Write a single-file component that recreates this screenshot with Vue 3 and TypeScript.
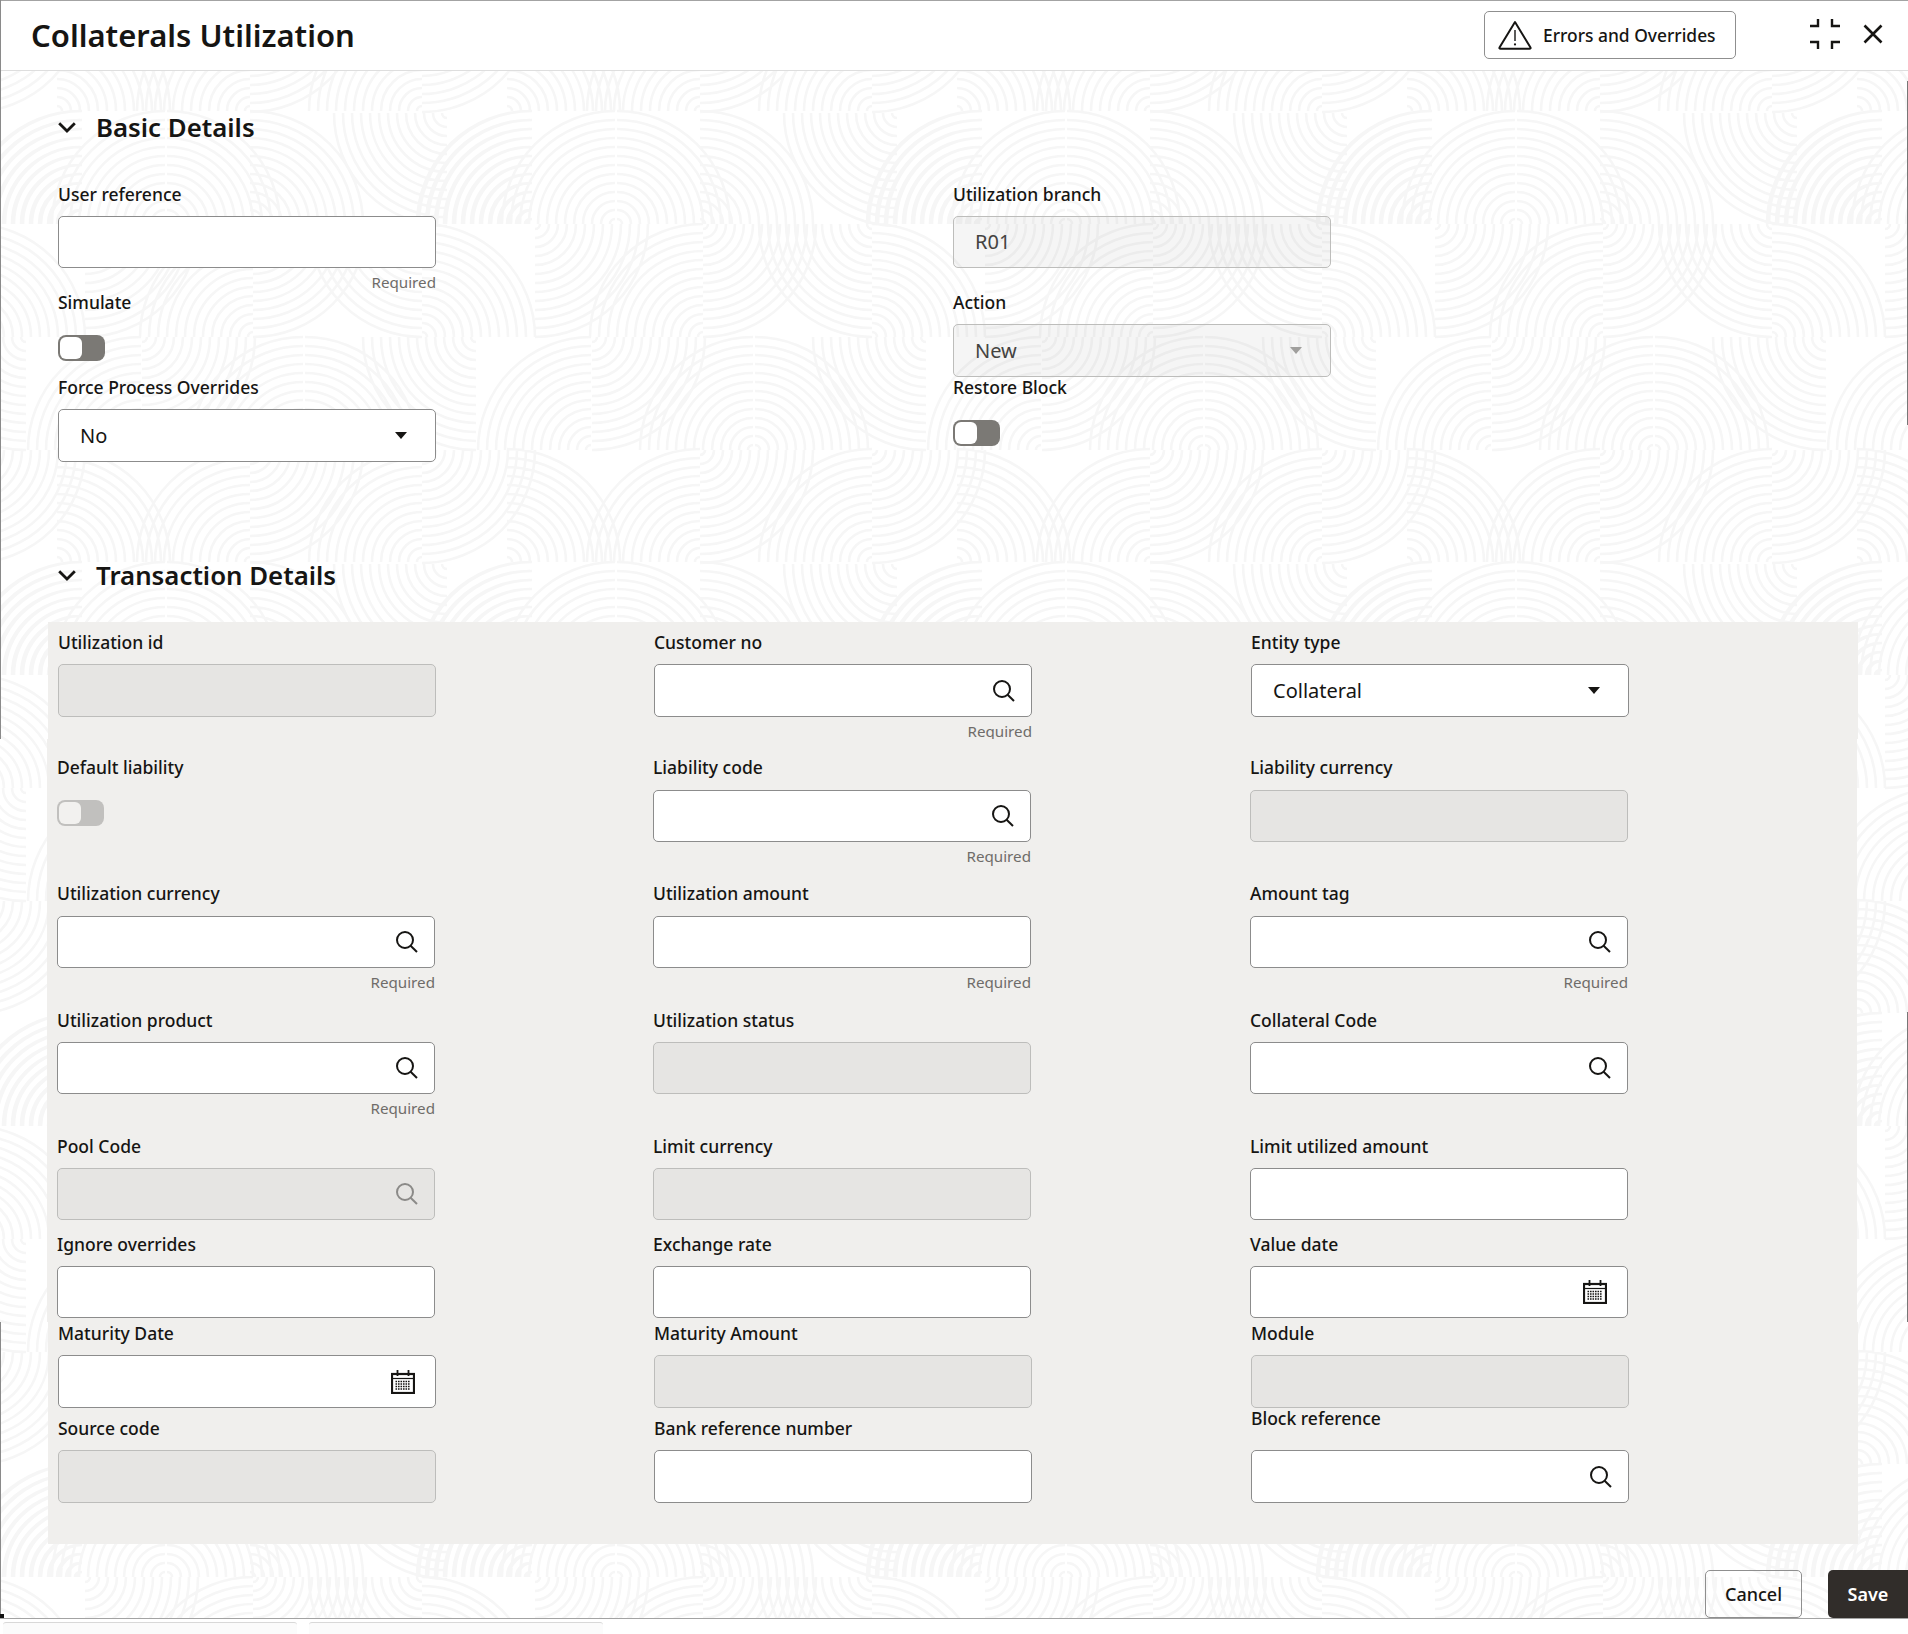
<script setup lang="ts">
type Kind = 'text' | 'disabled' | 'select' | 'search' | 'search-off' | 'date' | 'toggle' | 'toggle-off' | 'lookup-ro'
interface Field {
  label: string
  kind: Kind
  value?: string
  required?: boolean
  raised?: boolean
}
interface Row {
  cls: string
  fields: Field[]
}

type Quad = 'TL' | 'TR' | 'BR' | 'BL'
const quads: [number, number, Quad][] = [
  [532, 224, 'TL'], [615, 224, 'TL'], [617, 224, 'TR'], [700, 224, 'TR'], [897, 113, 'BL'], [530, 224, 'TL'],
  [535, 224, 'BR'], [703, 337, 'TL'], [703, 224, 'BR'], [872, 224, 'BL'], [872, 337, 'TR'],
  [476, 337, 'BL'], [591, 450, 'TL'], [592, 337, 'BR'], [753, 450, 'TL'], [755, 450, 'TR'],
  [507, 562, 'TR'], [700, 562, 'TL'], [700, 450, 'BR'], [872, 562, 'TL'], [872, 450, 'BR'],
]

function arc(cx: number, cy: number, q: Quad, r: number): string {
  const pts: Record<Quad, [number, number, number, number]> = {
    TL: [cx - r, cy, cx, cy - r],
    TR: [cx, cy - r, cx + r, cy],
    BR: [cx + r, cy, cx, cy + r],
    BL: [cx, cy + r, cx - r, cy],
  }
  const [a, b, c, d] = pts[q]
  return `M${a} ${b}A${r} ${r} 0 0 1 ${c} ${d}`
}

const arcPath: string = (() => {
  const parts: string[] = []
  for (const [x, y, q] of quads) {
    const cx0 = x % 450
    const cy0 = y % 451
    for (const dx of [-450, 0, 450]) {
      for (const dy of [-451, 0, 451]) {
        const cx = cx0 + dx
        const cy = cy0 + dy
        if (cx < -120 || cx > 570 || cy < -120 || cy > 571) continue
        for (let r = 5; r <= 113; r += 9) parts.push(arc(cx, cy, q, r))
      }
    }
  }
  return parts.join('')
})()

const basicLeft: { cls: string; field: Field }[] = [
  { cls: 'b1', field: { label: 'User reference', kind: 'text', required: true } },
  { cls: 'b2', field: { label: 'Simulate', kind: 'toggle' } },
  { cls: 'b3', field: { label: 'Force Process Overrides', kind: 'select', value: 'No' } },
]
const basicRight: { cls: string; field: Field }[] = [
  { cls: 'b1', field: { label: 'Utilization branch', kind: 'disabled', value: 'R01' } },
  { cls: 'b2', field: { label: 'Action', kind: 'lookup-ro', value: 'New' } },
  { cls: 'b3', field: { label: 'Restore Block', kind: 'toggle' } },
]

const segA: Row[] = [
  {
    cls: 'r1 tall53',
    fields: [
      { label: 'Utilization id', kind: 'disabled' },
      { label: 'Customer no', kind: 'search', required: true },
      { label: 'Entity type', kind: 'select', value: 'Collateral' },
    ],
  },
]
const segB: Row[] = [
  {
    cls: 'r2 gap10',
    fields: [
      { label: 'Default liability', kind: 'toggle-off' },
      { label: 'Liability code', kind: 'search', required: true },
      { label: 'Liability currency', kind: 'disabled' },
    ],
  },
  {
    cls: 'r3 gap10',
    fields: [
      { label: 'Utilization currency', kind: 'search', required: true },
      { label: 'Utilization amount', kind: 'text', required: true },
      { label: 'Amount tag', kind: 'search', required: true },
    ],
  },
  {
    cls: 'r4',
    fields: [
      { label: 'Utilization product', kind: 'search', required: true },
      { label: 'Utilization status', kind: 'disabled' },
      { label: 'Collateral Code', kind: 'search' },
    ],
  },
  {
    cls: 'r5',
    fields: [
      { label: 'Pool Code', kind: 'search-off' },
      { label: 'Limit currency', kind: 'disabled' },
      { label: 'Limit utilized amount', kind: 'text' },
    ],
  },
  {
    cls: 'r6',
    fields: [
      { label: 'Ignore overrides', kind: 'text' },
      { label: 'Exchange rate', kind: 'text' },
      { label: 'Value date', kind: 'date' },
    ],
  },
]
const segC: Row[] = [
  {
    cls: 'r7 tall53',
    fields: [
      { label: 'Maturity Date', kind: 'date' },
      { label: 'Maturity Amount', kind: 'disabled' },
      { label: 'Module', kind: 'disabled' },
    ],
  },
  {
    cls: 'r8 tall53',
    fields: [
      { label: 'Source code', kind: 'disabled' },
      { label: 'Bank reference number', kind: 'text' },
      { label: 'Block reference', kind: 'search', raised: true },
    ],
  },
]
const segments: { cls: string; rows: Row[] }[] = [
  { cls: 'seg-a', rows: segA },
  { cls: 'seg-b', rows: segB },
  { cls: 'seg-c', rows: segC },
]

const calendarRows: number[] = [11.5, 14, 16.5, 19]

function isToggle(k: Kind): boolean {
  return k === 'toggle' || k === 'toggle-off'
}
function isOff(k: Kind): boolean {
  return k === 'disabled' || k === 'search-off' || k === 'lookup-ro'
}
</script>

<template>
  <div class="app">
    <svg class="texture" width="1908" height="1618" aria-hidden="true">
      <defs>
        <pattern id="arcs" patternUnits="userSpaceOnUse" width="450" height="451">
          <path :d="arcPath" fill="none" stroke="#f6f6f6" stroke-width="2.6" />
        </pattern>
      </defs>
      <rect width="1908" height="1618" fill="url(#arcs)" />
    </svg>

    <span class="edge edge-l1"></span>
    <span class="edge edge-l2"></span>
    <span class="edge edge-r1"></span>
    <span class="edge edge-r2"></span>
    <span class="corner"></span>

    <div class="window">
      <header class="top">
        <h1 class="title">Collaterals Utilization</h1>
        <div class="top-actions">
          <button class="errors" type="button">
            <svg class="warn" width="34" height="30" viewBox="0 0 34 30" fill="none">
              <path d="M17 2 L32.5 27.5 Q33 28.8 31.5 28.8 H2.5 Q1 28.8 1.5 27.5 Z" stroke="#161513" stroke-width="2" stroke-linejoin="round" />
              <path d="M17 10 V21" stroke="#161513" stroke-width="1.4" />
              <circle cx="17" cy="24.4" r="1.1" fill="#161513" />
            </svg>
            <span>Errors and Overrides</span>
          </button>
          <svg class="compress" width="30" height="30" viewBox="0 0 30 30" fill="none" stroke="#161513" stroke-width="2.4">
            <path d="M0 7 H8 V0" />
            <path d="M22 0 V7 H30" />
            <path d="M0 23 H8 V30" />
            <path d="M22 30 V23 H30" />
          </svg>
          <svg class="close" width="20" height="20" viewBox="0 0 20 20" fill="none" stroke="#161513" stroke-width="2.6">
            <path d="M1.5 1.5 L18.5 18.5 M18.5 1.5 L1.5 18.5" />
          </svg>
        </div>
      </header>

      <main class="main">
        <div class="sec-head">
          <svg width="18" height="11" viewBox="0 0 18 11" fill="none" stroke="#161513" stroke-width="2.8">
            <path d="M1.2 1.2 L9 9 L16.8 1.2" />
          </svg>
          <h2>Basic Details</h2>
        </div>

        <div class="basic">
          <div v-for="(col, ci) in [basicLeft, basicRight]" :key="ci" class="basic-col">
            <div v-for="item in col" :key="item.field.label" class="field" :class="item.cls">
              <label class="lbl">{{ item.field.label }}</label>
              <div v-if="isToggle(item.field.kind)" class="toggle" :class="{ off: item.field.kind === 'toggle-off' }">
                <span class="knob"></span>
              </div>
              <div v-else class="box" :class="{ ro: isOff(item.field.kind) }">
                <span v-if="item.field.value" class="val">{{ item.field.value }}</span>
                <span v-if="item.field.kind === 'select' || item.field.kind === 'lookup-ro'" class="caret"></span>
              </div>
              <div v-if="item.field.required" class="req">Required</div>
            </div>
          </div>
        </div>

        <div class="sec-head">
          <svg width="18" height="11" viewBox="0 0 18 11" fill="none" stroke="#161513" stroke-width="2.8">
            <path d="M1.2 1.2 L9 9 L16.8 1.2" />
          </svg>
          <h2>Transaction Details</h2>
        </div>

        <section class="panel">
          <div v-for="seg in segments" :key="seg.cls" class="seg" :class="seg.cls">
            <div v-for="row in seg.rows" :key="row.cls" class="row" :class="row.cls">
              <div v-for="f in row.fields" :key="f.label" class="field" :class="{ raised: f.raised }">
                <label class="lbl">{{ f.label }}</label>
                <div v-if="isToggle(f.kind)" class="toggle" :class="{ off: f.kind === 'toggle-off' }">
                  <span class="knob"></span>
                </div>
                <div v-else class="box" :class="{ ro: isOff(f.kind) }">
                  <span v-if="f.value" class="val">{{ f.value }}</span>
                  <span v-if="f.kind === 'select'" class="caret"></span>
                  <svg v-if="f.kind === 'search' || f.kind === 'search-off'" class="search" width="23" height="23" viewBox="0 0 23 23" fill="none" :stroke="f.kind === 'search' ? '#161513' : '#8b8a88'" stroke-width="2">
                    <circle cx="10" cy="10" r="8" />
                    <path d="M15.6 15.8 L22 22" />
                  </svg>
                  <svg v-if="f.kind === 'date'" class="cal" width="24" height="24" viewBox="0 0 24 24" fill="none" stroke="#161513">
                    <rect x="1" y="4" width="22" height="19" stroke-width="2.2" />
                    <path d="M6.5 0 V6 M17.5 0 V6" stroke-width="1.8" />
                    <path d="M1 8.5 H23" stroke-width="1.2" />
                    <path v-for="y in calendarRows" :key="y" :d="`M4.5 ${y} H19.5`" stroke-width="1.7" stroke-dasharray="1.6 0.9" />
                  </svg>
                </div>
                <div v-if="f.required" class="req">Required</div>
              </div>
            </div>
          </div>
        </section>

        <footer class="foot">
          <button class="btn cancel" type="button">Cancel</button>
          <button class="btn save" type="button">Save</button>
        </footer>
      </main>
    </div>

    <div class="tabs">
      <span class="tab"></span>
      <span class="tab"></span>
    </div>
  </div>
</template>

<style>
html, body { margin: 0; background: #fff; }
</style>

<style scoped>
.app {
  position: relative;
  width: 1908px;
  height: 1634px;
  overflow: hidden;
  background: #fff;
  color: #161513;
  font-family: "Noto Sans", "Open Sans", sans-serif;
}
.texture { position: absolute; left: 0; top: 0; }
.edge { position: absolute; width: 1px; background: #8a8a8a; z-index: 3; }
.edge-l1 { left: 0; top: 0; height: 739px; }
.edge-l2 { left: 0; top: 1322px; height: 296px; }
.edge-r1 { right: 0; top: 81px; height: 344px; background: #777; }
.edge-r2 { right: 0; top: 1012px; height: 310px; background: #777; }
.corner { position: absolute; left: 0; top: 1614px; width: 4px; height: 4px; background: #111; z-index: 3; }

.window {
  position: relative;
  display: flex;
  flex-direction: column;
  height: 1618px;
  box-sizing: content-box;
  border-bottom: 1px solid #a3a3a3;
}
.top {
  display: flex;
  align-items: center;
  justify-content: space-between;
  box-sizing: border-box;
  height: 71px;
  padding: 0 25px 0 31px;
  background: #fff;
  border-top: 1px solid #a3a3a3;
  border-bottom: 1px solid #dedede;
}
.title { margin: -2px 0 0; font-size: 31px; line-height: 40px; font-weight: 600; }
.top-actions { display: flex; align-items: center; }
.errors {
  display: flex;
  align-items: center;
  gap: 11px;
  box-sizing: border-box;
  width: 252px;
  height: 48px;
  padding: 0 0 0 13px;
  margin-top: -2px;
  background: #fff;
  border: 1px solid #8f8f8f;
  border-radius: 5px;
  font-family: inherit;
  font-size: 17.4px;
  font-weight: 500;
  color: #161513;
}
.compress { margin: -3px 0 0 74px; }
.close { margin: -4px 0 0 23px; }

.main { position: relative; flex: 1; padding: 39px 0 0 48px; min-height: 0; }
.sec-head { display: flex; align-items: center; height: 36px; padding-left: 10px; }
.sec-head h2 { margin: -2px 0 0 20px; font-size: 25.8px; line-height: 36px; font-weight: 600; }
.sec-head svg { flex: none; margin-top: -2px; }

.basic {
  display: grid;
  grid-template-columns: 895px 895px;
  padding-left: 10px;
  margin: 37px 0 0;
}
.b1 { height: 108px; }
.b2 { height: 85px; }
.b3 { height: 182px; }

.field { width: 378px; }
.lbl {
  display: block;
  height: 24px;
  margin-bottom: 9px;
  font-size: 17.5px;
  line-height: 22px;
  font-weight: 500;
}
.box {
  position: relative;
  display: flex;
  align-items: center;
  box-sizing: border-box;
  height: 52px;
  padding: 0 21px;
  background: #fff;
  border: 1px solid #8c8c8c;
  border-radius: 5px;
}
.b2 .box, .b3 .box { height: 53px; }
.box.ro {
  background: rgba(22, 21, 19, 0.045);
  border-color: #bdbdbb;
}
.val { font-size: 20px; line-height: 28px; font-weight: 400; color: #161513; }
.ro .val { color: #444341; }
.caret {
  position: absolute;
  right: 28px;
  top: 50%;
  margin-top: -4px;
  width: 0;
  height: 0;
  border-left: 6.5px solid transparent;
  border-right: 6.5px solid transparent;
  border-top: 7px solid #161513;
}
.ro .caret { border-top-color: #a09f9d; }
.search { position: absolute; right: 16px; top: 50%; margin-top: -12px; }
.cal { position: absolute; right: 20px; top: 50%; margin-top: -12px; }
.req {
  margin-top: 3px;
  text-align: right;
  font-size: 15.2px;
  line-height: 22px;
  color: #6f6c69;
}

.toggle {
  display: flex;
  box-sizing: border-box;
  width: 47px;
  height: 26px;
  margin-top: 20px;
  padding: 2px;
  background: #7b7975;
  border-radius: 8px;
}
.toggle.off { background: #c1c0be; }
.knob { display: block; width: 22px; height: 22px; background: #fff; border-radius: 6px; }
.toggle.off .knob { background: #f2f1ef; }

.sec-head + .panel { margin-top: 28px; }
.panel { display: flex; flex-direction: column; }
.seg { width: 1810px; padding-left: 10px; box-sizing: border-box; background: #f0efed; }
.seg-a { height: 117px; padding-top: 9px; }
.seg-b { height: 583px; padding-top: 17px; margin-left: -1px; }
.seg-c { height: 222px; }
.row { display: grid; grid-template-columns: 596px 597px 597px; }
.r1 { height: 108px; }
.r2 { height: 126px; }
.r3 { height: 127px; }
.r4 { height: 126px; }
.r5 { height: 98px; }
.r6 { height: 89px; }
.r7 { height: 95px; }
.r8 { height: 127px; }
.gap10 .lbl { margin-bottom: 10px; }
.tall53 .box { height: 53px; }
.raised .lbl { margin-top: -10px; margin-bottom: 19px; }

.foot { display: flex; justify-content: flex-end; gap: 26px; margin-top: 26px; }
.btn {
  box-sizing: border-box;
  height: 48px;
  font-family: inherit;
  font-size: 18px;
  padding: 0;
}
.cancel {
  width: 97px;
  background: transparent;
  border: 1px solid #8f8f8f;
  border-radius: 5px;
  color: #161513;
  font-weight: 500;
}
.save {
  width: 80px;
  background: #312d2a;
  border: 0;
  border-radius: 5px 0 0 5px;
  color: #fff;
  font-weight: 600;
}

.tabs { position: absolute; left: 3px; top: 1622px; display: flex; gap: 12px; }
.tab {
  display: block;
  box-sizing: border-box;
  width: 294px;
  height: 12px;
  background: #fbfbfb;
  border-top: 1px solid #d8d8d8;
  border-radius: 3px 3px 0 0;
}
</style>
